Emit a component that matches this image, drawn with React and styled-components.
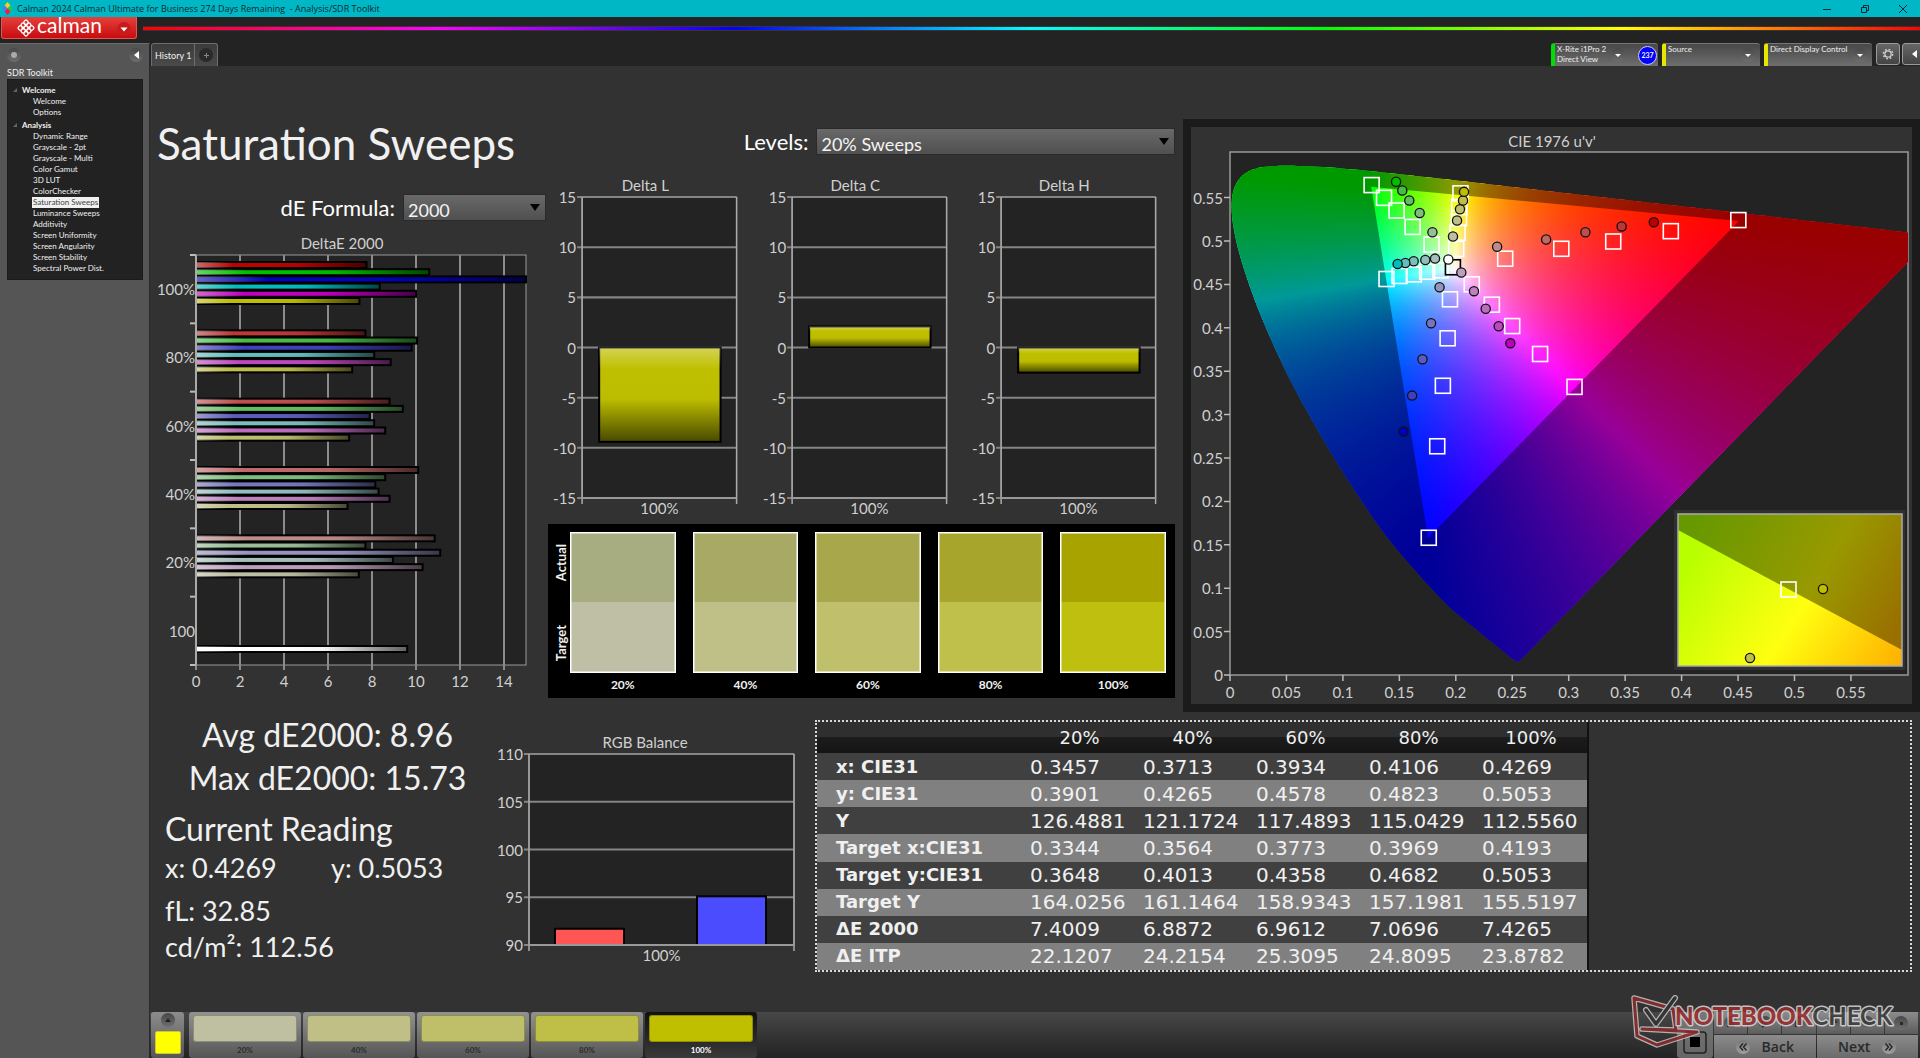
import React from 'react';
import styled, { createGlobalStyle, css } from 'styled-components';

const GlobalStyle = createGlobalStyle`
  * {
    box-sizing: border-box;
  }

  body {
    margin: 0;
    background: #323232;
    color: #f0f0f0;
    font-family: Lato, 'Open Sans', sans-serif;
  }

  button, select {
    font-family: inherit;
    color: inherit;
    border: 0;
    padding: 0;
  }

  svg {
    display: block;
  }
`;

/* ---------- data ---------- */

const LEVELS = ['20%', '40%', '60%', '80%', '100%'];

const TREE = [
  { title: 'Welcome', items: ['Welcome', 'Options'] },
  {
    title: 'Analysis',
    items: [
      'Dynamic Range', 'Grayscale - 2pt', 'Grayscale - Multi', 'Color Gamut', '3D LUT',
      'ColorChecker', 'Saturation Sweeps', 'Luminance Sweeps', 'Additivity',
      'Screen Uniformity', 'Screen Angularity', 'Screen Stability', 'Spectral Power Dist.',
    ],
  },
];

const SWATCHES = [
  { level: '20%', actual: '#a7ad80', target: '#bfbfa5', tile: '#bfbfa2' },
  { level: '40%', actual: '#a9a966', target: '#bfbf88', tile: '#bfbf86' },
  { level: '60%', actual: '#a9a74b', target: '#bfbf6c', tile: '#bfbf69' },
  { level: '80%', actual: '#a8a52d', target: '#bfbf4b', tile: '#bfbf48' },
  { level: '100%', actual: '#a9a300', target: '#bfbf10', tile: '#bfbf00' },
];

const READINGS = [
  ['x: CIE31', '0.3457', '0.3713', '0.3934', '0.4106', '0.4269'],
  ['y: CIE31', '0.3901', '0.4265', '0.4578', '0.4823', '0.5053'],
  ['Y', '126.4881', '121.1724', '117.4893', '115.0429', '112.5560'],
  ['Target x:CIE31', '0.3344', '0.3564', '0.3773', '0.3969', '0.4193'],
  ['Target y:CIE31', '0.3648', '0.4013', '0.4358', '0.4682', '0.5053'],
  ['Target Y', '164.0256', '161.1464', '158.9343', '157.1981', '155.5197'],
  ['ΔE 2000', '7.4009', '6.8872', '6.9612', '7.0696', '7.4265'],
  ['ΔE ITP', '22.1207', '24.2154', '25.3095', '24.8095', '23.8782'],
];

// red, green, blue, cyan, magenta, yellow per level
const DELTA_E = [
  { label: '100%', sat: 4, values: [7.75, 10.6, 15.73, 8.35, 10, 7.43] },
  { label: '80%', sat: 3, values: [7.7, 10.05, 9.8, 8.1, 8.85, 7.1] },
  { label: '60%', sat: 2, values: [8.8, 9.4, 7.9, 8.1, 8.6, 6.96] },
  { label: '40%', sat: 1, values: [10.1, 8.6, 8.15, 8.3, 8.8, 6.89] },
  { label: '20%', sat: 0, values: [10.85, 7.7, 11.1, 8.95, 10.3, 7.4] },
];

const HUES = ['r', 'g', 'b', 'c', 'm', 'y'];
const MASKS = { r: [1, 0, 0], g: [0, 1, 0], b: [0, 0, 1], c: [0, 1, 1], m: [1, 0, 1], y: [1, 1, 0] };
const OFF = {
  r: [138, 104, 78, 55, 0],
  g: [152, 124, 98, 70, 0],
  b: [148, 118, 92, 64, 0],
  c: [166, 146, 122, 96, 0],
  m: [158, 128, 108, 72, 0],
  y: [165, 136, 108, 75, 0],
};

const hueColor = (hue, sat) => {
  const off = OFF[hue][sat];
  return `rgb(${MASKS[hue].map((on) => (on ? 190 : off)).join(',')})`;
};

const TARGETS = [
  [0.125, 0.565], [0.136, 0.5503], [0.1471, 0.5357], [0.1613, 0.5168], [0.1781, 0.4965],
  [0.2037, 0.5555], [0.2026, 0.5397], [0.2024, 0.527], [0.2011, 0.5101], [0.1999, 0.4914],
  [0.2433, 0.4802], [0.293, 0.4916], [0.339, 0.5], [0.39, 0.5119], [0.4498, 0.5247],
  [0.1382, 0.4568], [0.1497, 0.4603], [0.1624, 0.4622], [0.1742, 0.4652], [0.186, 0.4668],
  [0.1944, 0.4334], [0.1923, 0.3885], [0.1881, 0.3338], [0.1831, 0.2641], [0.1756, 0.1587],
  [0.2137, 0.4507], [0.2315, 0.4272], [0.2495, 0.4026], [0.2742, 0.3704], [0.3047, 0.3325],
];

// measured points, 20% first
const MEASURED = {
  r: [[0.2366, 0.4934], [0.28, 0.5018], [0.3148, 0.5101], [0.3469, 0.5168], [0.3754, 0.5216]],
  g: [[0.1793, 0.5101], [0.168, 0.5322], [0.1588, 0.5467], [0.1526, 0.5582], [0.1471, 0.5683]],
  b: [[0.1856, 0.4467], [0.1781, 0.4052], [0.1705, 0.3638], [0.1613, 0.3219], [0.1538, 0.2804]],
  c: [[0.1816, 0.4797], [0.173, 0.4781], [0.1627, 0.4766], [0.1553, 0.4747], [0.1485, 0.4735]],
  m: [[0.2049, 0.4637], [0.2161, 0.4422], [0.2265, 0.4219], [0.238, 0.4018], [0.2483, 0.3823]],
  y: [[0.1975, 0.5052], [0.2011, 0.5236], [0.2037, 0.5366], [0.2064, 0.5467], [0.2073, 0.5566]],
};

// spectral locus, CIE 1931 xy
const LOCUS = [
  [0.1741, 0.005], [0.1714, 0.0051], [0.1644, 0.0109], [0.1566, 0.0177], [0.144, 0.0297],
  [0.1241, 0.0578], [0.1096, 0.0868], [0.0913, 0.1327], [0.0687, 0.2007], [0.0454, 0.295],
  [0.0235, 0.4127], [0.0082, 0.5384], [0.0039, 0.6548], [0.0139, 0.7502], [0.0389, 0.812],
  [0.0743, 0.8338], [0.1142, 0.8262], [0.1547, 0.8059], [0.2296, 0.7543], [0.3016, 0.6923],
  [0.3731, 0.6245], [0.4441, 0.5547], [0.5125, 0.4866], [0.5752, 0.4242], [0.627, 0.3725],
  [0.6658, 0.334], [0.6915, 0.3083], [0.719, 0.2809], [0.7347, 0.2653],
];

/* ---------- colour math ---------- */

// linear RGB, scaled so that the strongest channel is full
const uvColor = (u, v) => {
  const X = (9 * u) / (4 * v);
  const Z = (12 - 3 * u - 20 * v) / (4 * v);
  const rgb = [
    3.2406 * X - 1.5372 - 0.4986 * Z,
    -0.9689 * X + 1.8758 + 0.0415 * Z,
    0.0557 * X - 0.204 + 1.057 * Z,
  ].map((c) => Math.max(0, c));
  const peak = Math.max(...rgb) || 1;
  return `rgb(${rgb.map((c) => Math.round((c / peak) * 255)).join(',')})`;
};

/* ---------- window chrome ---------- */

const Window = styled.div`
  min-height: 100vh;
  display: flex;
  flex-direction: column;
  overflow: hidden;
`;

const TitleBar = styled.header`
  height: 17px;
  display: flex;
  align-items: center;
  gap: 4px;
  padding: 0 0 0 2px;
  background: #00b7c6;
  color: #0b2a30;
  font-size: 9px;
  font-family: 'Open Sans', sans-serif;

  h1 {
    flex: 1;
    margin: 0;
    font-size: inherit;
    font-weight: 400;
    white-space: pre;
  }
`;

const WindowButton = styled.button`
  width: 34px;
  height: 17px;
  background: none;
  display: grid;
  place-items: center;
`;

const Banner = styled.div`
  height: 26px;
  background: #232323;
  display: flex;
  align-items: flex-start;
  gap: 6px;
  padding-left: 1px;
`;

const Brand = styled.button`
  width: 136px;
  height: 22px;
  display: flex;
  align-items: center;
  justify-content: center;
  border-radius: 0 0 3px 3px;
  border: 1px solid #e9544f;
  border-top: 0;
  background: linear-gradient(#e5403c, #c80c10);
  color: #fff;

  svg {
    overflow: visible;
  }
`;

const Rainbow = styled.div`
  flex: 1;
  height: 5px;
  margin-top: 9px;
  border: solid #3a3036;
  border-width: 1px 0;
  background: linear-gradient(to right, #f00, #f0f, #00f, #0ff, #0f0, #ff0, #f00);
`;

const Body = styled.div`
  flex: 1;
  display: flex;
`;

const Round = styled.span`
  width: 14px;
  height: 14px;
  border-radius: 50%;
  display: grid;
  place-items: center;
  background: ${(p) => (p.$dark ? '#2a2a2a' : 'linear-gradient(#484848, #6e6e6e)')};
`;

/* ---------- sidebar ---------- */

const Sidebar = styled.aside`
  width: 150px;
  flex: none;
  background: #555;
  border-top: 1px solid #6c6c6c;
  border-right: 1px solid #2a2a2a;
  padding: 0 6px 0 7px;
`;

const SidebarTop = styled.div`
  height: 22px;
  display: flex;
  justify-content: space-between;
  align-items: center;

  button {
    background: none;
  }
`;

const SidebarTitle = styled.h2`
  margin: 0;
  font-size: 9px;
  line-height: 13px;
  font-weight: 400;
`;

const Tree = styled.nav`
  background: #222;
  border: 1px solid #1b1b1b;
  padding: 4px 5px 4px;
  font-size: 8px;
  line-height: 11px;

  ul {
    list-style: none;
    margin: 0;
    padding: 0 0 1px 19px;
  }
`;

const TreeHead = styled.div`
  display: flex;
  align-items: center;
  gap: 5px;
  line-height: 12px;
  font-weight: 700;
`;

const TreeLink = styled.a`
  display: inline-block;
  padding: 0 1px;
  line-height: 11px;
  vertical-align: top;
  text-decoration: none;
  color: ${(p) => (p.$active ? '#444' : '#f0f0f0')};
  background: ${(p) => (p.$active ? '#f0f0f0' : 'none')};
`;

/* ---------- tab strip ---------- */

const Main = styled.main`
  flex: 1;
  min-width: 0;
  display: flex;
  flex-direction: column;
`;

const Strip = styled.div`
  height: 23px;
  margin-right: -4px;
  background: #232323;
  display: flex;
  align-items: stretch;
  gap: 4px;
`;

const HistoryTabs = styled.div`
  display: flex;
  border: 1px solid #6e6e6e;
  border-bottom: 0;
  border-radius: 3px 3px 0 0;
  background: linear-gradient(#3c3c3c, #4a4a4a);
  margin-right: auto;
  margin-left: 1px;

  button {
    padding: 0 3px;
    font-size: 9px;
    background: none;
    border-right: 1px solid #6e6e6e;
  }

  button:last-child {
    padding: 0 4px;
    border: 0;
  }
`;

const Device = styled.button`
  width: ${(p) => p.$width}px;
  display: flex;
  align-items: center;
  justify-content: space-between;
  padding: 0 5px 0 2px;
  border-top: 1px solid #777;
  border-left: 4px solid ${(p) => p.$color};
  border-radius: 3px 3px 0 0;
  background: linear-gradient(#484848, #6e6e6e);
  text-align: left;
  font-size: 8px;
  line-height: 10px;
`;

const DeviceName = styled.span`
  align-self: flex-start;
  flex: 1;
  white-space: pre-line;
`;

const Count = styled.span`
  width: 19px;
  height: 19px;
  margin-left: 13px;
  margin-right: -4px;
  border-radius: 50%;
  border: 1px solid #c8c8ff;
  background: #00f;
  font-size: 7px;
  font-weight: 700;
  line-height: 17px;
  text-align: center;
`;

const IconButton = styled.button`
  width: 24px;
  height: 22px;
  margin-right: -2px;
  border: 1px solid #9a9a9a;
  border-radius: 3px;
  display: grid;
  place-items: center;
  background: linear-gradient(#666, #444);
`;

/* ---------- workspace ---------- */

const Upper = styled.section`
  display: grid;
  grid-template-columns: 396fr 637fr 737fr;
`;

const Overview = styled.div`
  padding-top: 51px;
`;

const PageTitle = styled.h2`
  margin: 0 0 25px;
  padding-left: 7px;
  font-size: 44px;
  line-height: 52px;
  font-weight: 400;
`;

const Field = styled.label`
  display: flex;
  align-items: center;
  justify-content: flex-end;
  gap: 8px;
  font-size: 22px;
  line-height: 26px;
  color: #fff;
`;

const SelectBox = styled.span`
  position: relative;
  width: ${(p) => p.$width};

  select {
    appearance: none;
    display: block;
    width: 100%;
    height: 27px;
    padding: 4px 4px 0;
    border: 1px solid #2a2a2a;
    background: linear-gradient(#696969, #505050);
    color: #f4f4f4;
    font-size: 18px;
  }

  svg {
    position: absolute;
    right: 6px;
    top: 10px;
    pointer-events: none;
  }
`;

const DeltaEArea = styled.div`
  margin-top: 9px;
`;

const Middle = styled.div`
  padding: 62px 8px 0 0;
`;

const DeltaRow = styled.div`
  display: grid;
  grid-template-columns: repeat(3, 1fr);
  margin: 21px 0 2px;
`;

const ChartSvg = styled.svg`
  width: 100%;
  height: auto;

  text {
    fill: #d0d0d0;
    font-size: 15px;
  }
`;

const SwatchPanel = styled.div`
  margin-left: 2px;
  background: #000;
  padding: 8px 9px 0 4px;
  height: 174px;
  display: flex;
  font-weight: 700;
`;

const SwatchSides = styled.div`
  width: 18px;
  height: 141px;
  padding: 12px 0;
  display: flex;
  flex-direction: column-reverse;
  justify-content: space-between;
  align-items: center;
  font-size: 13px;

  span {
    writing-mode: vertical-rl;
    rotate: 180deg;
    line-height: 14px;
  }
`;

const SwatchGrid = styled.div`
  flex: 1;
  display: grid;
  grid-template-columns: repeat(5, 1fr);
  gap: 17px;
`;

const SwatchItem = styled.figure`
  margin: 0;
  text-align: center;

  figcaption {
    font-size: 12px;
    line-height: 23px;
  }
`;

const SwatchColor = styled.div`
  height: 141px;
  border: 1px solid #fff;
  box-shadow: inset 0 0 0 1px rgba(255, 255, 255, 0.5);
  background: ${(p) => `linear-gradient(${p.$actual} 50%, ${p.$target} 50%)`};
`;

const CiePanel = styled.div`
  margin: 53px 0 0;
  border: 8px solid #1b1b1b;
  background: #323232;
`;

const Lower = styled.section`
  display: grid;
  grid-template-columns: 340fr 325fr 1105fr;
`;

const Stats = styled.div`
  padding: 1px 0 0 15px;
  font-size: 27px;
  line-height: 36px;

  p {
    margin: 0;
  }
`;

const Headline = styled.p`
  font-size: 32px;
  line-height: 43px;
  ${(p) => p.$center && css`
    text-align: center;
  `}
`;

const Current = styled.div`
  margin-top: 8px;
`;

const Pair = styled.div`
  display: grid;
  grid-template-columns: 166px 1fr;
  padding-bottom: 7px;
`;

const RgbArea = styled.div`
  padding-top: 18px;
`;

const TableFrame = styled.div`
  margin: 8px 8px 0 0;
  border: 2px dotted #d8d8d8;
  align-self: start;
`;

const Table = styled.table`
  width: 772px;
  height: 248px;
  border-collapse: collapse;
  table-layout: fixed;
  border-right: 2px solid #111;
  font-family: 'DejaVu Sans', sans-serif;
  font-size: 20px;
  line-height: 20px;

  th, td {
    padding: 0 0 0 7px;
    text-align: left;
    font-weight: 400;
    white-space: nowrap;
  }

  thead tr {
    height: 31px;
    background: linear-gradient(#2f2f2f 50%, #1c1c1c 50%, #141414);
  }

  thead th {
    padding: 0;
    text-align: center;
    font-size: 18px;
  }

  thead th:first-child {
    width: 206px;
  }

  tbody tr {
    background: #404040;
  }

  tbody tr:nth-child(even) {
    background: #808080;
  }

  tbody th {
    padding-left: 19px;
    font-weight: 700;
    font-size: 18px;
  }
`;

/* ---------- footer ---------- */

const Footer = styled.footer`
  position: relative;
  height: 46px;
  margin-top: auto;
  display: flex;
  gap: 2px;
  padding: 0 2px 0 1px;
  background: linear-gradient(#474747, #232323);
`;

const Picker = styled.button`
  width: 33px;
  margin-right: 3px;
  padding: 1px 4px 4px;
  border-radius: 3px;
  display: flex;
  flex-direction: column;
  justify-content: space-between;
  align-items: center;
  background: linear-gradient(#8c8c8c, #555);

  i {
    width: 26px;
    height: 23px;
    border-radius: 2px;
    border: 1px solid #c8c830;
    background: #ff0;
  }
`;

const Tile = styled.button`
  width: 112px;
  padding: 3px 4px 0;
  border-radius: 3px;
  font-size: 8px;
  line-height: 16px;
  color: ${(p) => (p.$active ? '#fff' : '#2c2c2c')};
  font-weight: 700;
  background: ${(p) => (p.$active ? 'linear-gradient(#111, #3a3a3a)' : 'linear-gradient(#929292, #555)')};

  i {
    display: block;
    height: 27px;
    border: 1px solid rgba(0, 0, 0, 0.25);
    border-radius: 3px;
    background: ${(p) => p.$color};
  }
`;

const Transport = styled.div`
  margin-left: auto;
  display: flex;
  gap: 1px;
  color: #222;
`;

const StopButton = styled.button`
  width: 36px;
  border-radius: 3px;
  display: grid;
  place-items: end center;
  padding-bottom: 4px;
  background: linear-gradient(#777, #666);
`;

const NavGrid = styled.div`
  width: 204px;
  display: grid;
  grid-template-columns: repeat(6, 1fr);
  grid-template-rows: 22px 23px;
  gap: 1px;
`;

const SmallButton = styled.button`
  display: grid;
  place-items: center;
  background: linear-gradient(#8c8c8c, #5c5c5c);
`;

const NavButton = styled.button`
  grid-column: span 3;
  display: flex;
  align-items: center;
  justify-content: center;
  gap: 12px;
  font-family: 'Open Sans', sans-serif;
  font-weight: 600;
  font-size: 14px;
  color: #2a2a2a;
  background: linear-gradient(#8c8c8c, #6a6a6a);

  ${Round} {
    background: linear-gradient(#777, #a0a0a0);
  }
`;

const Watermark = styled.svg`
  position: absolute;
  right: 4px;
  bottom: 8px;
  overflow: visible;
  pointer-events: none;

  text {
    font-size: 24px;
    font-weight: 900;
    paint-order: stroke;
    stroke: #d8d8d8;
    stroke-width: 3px;
    stroke-linejoin: round;
  }
`;

/* ---------- pieces ---------- */

const Caret = ({ color = '#fff', size = 8 }) => (
  <svg width={size} height={size / 2} viewBox="0 0 8 4">
    <path d="M0 0h8L4 4z" fill={color} />
  </svg>
);

const LeftCaret = () => (
  <svg width="5" height="8" viewBox="0 0 5 8">
    <path d="M5 0v8L0 4z" fill="#fff" />
  </svg>
);

const Dropdown = ({ width, options }) => (
  <SelectBox $width={width}>
    <select>
      {options.map((o) => <option key={o}>{o}</option>)}
    </select>
    <svg width="10" height="7" viewBox="0 0 10 7">
      <path d="M0 0h10L5 7z" fill="#000" />
    </svg>
  </SelectBox>
);

const BrandLogo = () => (
  <svg width="120" height="20" viewBox="0 0 120 20">
    <g transform="translate(17 10) rotate(45)" fill="none" stroke="#fff" strokeWidth="1.3">
      {[-4, 0, 4].map((x) => [-4, 0, 4].map((y) => (
        <rect key={`${x}${y}`} x={x - 2} y={y - 2} width="4" height="4" rx="1.4" />
      )))}
    </g>
    <text x="28" y="15" fill="#fff" fontSize="21" fontFamily="Lato, sans-serif">calman</text>
    <circle cx="115" cy="11" r="7" fill="#c81c1c" />
    <path d="M111.500 9.500h7l-3.500 4z" fill="#fff" />
  </svg>
);

const AppIcon = () => (
  <svg width="11" height="13" viewBox="0 0 11 13">
    <path d="M5.500 0L8.500 3.500 5.500 6.500 2.500 3.500z" fill="#f5d020" />
    <path d="M2.500 3.500L5.500 6.500 2.500 9.500 0 6.500z" fill="#4d7df0" />
    <path d="M8.500 3.500L11 6.500 8.500 9.500 5.500 6.500z" fill="#28c840" />
    <path d="M5.500 6.500L8.500 9.500 5.500 13 2.500 9.500z" fill="#e8204c" />
  </svg>
);

const GearIcon = () => (
  <svg width="12" height="12" viewBox="0 0 12 12" fill="none" stroke="#d0d0d0">
    <circle cx="6" cy="6" r="3.200" strokeWidth="1.300" />
    <circle cx="6" cy="6" r="4.700" strokeWidth="1.400" strokeDasharray="1.800 1.890" />
  </svg>
);

function DeltaEChart() {
  const x0 = 46;
  const top = 25;
  const bottom = 435;
  const unit = 22;
  const right = 376;
  const pitch = (bottom - top) / 6;
  return (
    <ChartSvg viewBox="0 0 396 470">
      <defs>
        <linearGradient id="shade">
          <stop offset="0" stopColor="#fff" stopOpacity="0.4" />
          <stop offset="0.220" stopColor="#fff" stopOpacity="0" />
          <stop offset="0.600" stopColor="#000" stopOpacity="0.040" />
          <stop offset="1" stopColor="#000" stopOpacity="0.620" />
        </linearGradient>
      </defs>
      <text x="192" y="19" textAnchor="middle">DeltaE 2000</text>
      <rect x={x0} y={top} width={right - x0} height={bottom - top} fill="#232323" stroke="#999" />
      {[0, 2, 4, 6, 8, 10, 12, 14].map((n) => (
        <g key={n}>
          <path d={`M${x0 + n * unit} ${top}V${bottom + 5}`} stroke="#8c8c8c" strokeWidth="2" />
          <text x={x0 + n * unit} y="457" textAnchor="middle">{n}</text>
        </g>
      ))}
      {[0, 1, 2, 3, 4, 5, 6].map((n) => (
        <path key={n} d={`M${x0 - 6} ${top + n * pitch}h6`} stroke="#bbb" strokeWidth="2" />
      ))}
      {DELTA_E.map((group, g) => (
        <g key={group.label}>
          <text x="45" y={65 + g * pitch} textAnchor="end">{group.label}</text>
          {group.values.map((v, i) => {
            const bar = {
              x: x0,
              y: 32 + g * pitch + i * 7.2,
              width: Math.min(v * unit, right - x0),
              height: 6,
            };
            return (
              <g key={HUES[i]}>
                <rect {...bar} fill={hueColor(HUES[i], group.sat)} stroke="#000" strokeWidth="2" />
                <rect {...bar} fill="url(#shade)" />
              </g>
            );
          })}
        </g>
      ))}
      <text x="45" y={65 + 5 * pitch} textAnchor="end">100</text>
      <rect x={x0} y="416" width={9.6 * unit} height="6" fill="#fff" stroke="#000" strokeWidth="2" />
      <rect x={x0} y="416" width={9.6 * unit} height="6" fill="url(#shade)" />
      <path d={`M${x0} ${top}V${bottom}`} stroke="#aaa" strokeWidth="2" />
    </ChartSvg>
  );
}

function ColumnChart({ title, box, plot, min, max, step, bars, titleX }) {
  const [x0, top, right, bottom] = plot;
  const y = (v) => bottom - ((v - min) / (max - min)) * (bottom - top);
  const ticks = [];
  for (let t = min; t <= max; t += step) ticks.push(t);
  return (
    <ChartSvg viewBox={`0 0 ${box[0]} ${box[1]}`}>
      <defs>
        <linearGradient id="gloss" x2="0" y2="1">
          <stop offset="0" stopColor="#fff" stopOpacity="0.330" />
          <stop offset="0.230" stopColor="#fff" stopOpacity="0" />
          <stop offset="0.550" stopColor="#000" stopOpacity="0.020" />
          <stop offset="1" stopColor="#000" stopOpacity="0.620" />
        </linearGradient>
      </defs>
      <text x={titleX} y={top - 6} textAnchor="middle">{title}</text>
      <rect x={x0} y={top} width={right - x0} height={bottom - top} fill="#232323" stroke="#999" />
      {ticks.map((t) => (
        <g key={t}>
          <path d={`M${x0 - 5} ${y(t)}H${right}`} stroke="#858585" strokeWidth="2" />
          <text x={x0 - 6} y={y(t) + 6} textAnchor="end">{t}</text>
        </g>
      ))}
      <path d={`M${x0} ${top}V${bottom + 6}M${right} ${top}V${bottom + 6}`} stroke="#aaa" strokeWidth="1.500" />
      {bars.map((b) => {
        const base = Math.max(0, min);
        const rect = {
          x: b.x,
          y: Math.min(y(b.value), y(base)),
          width: b.width,
          height: Math.abs(y(b.value) - y(base)),
        };
        return (
          <g key={b.x}>
            <rect {...rect} fill={b.color} stroke="#000" strokeWidth="2" />
            {b.gloss && <rect {...rect} fill="url(#gloss)" />}
          </g>
        );
      })}
      <path d={`M${x0} ${bottom}H${right}`} stroke="#999" strokeWidth="2" />
      <text x={(x0 + right) / 2} y={bottom + 16} textAnchor="middle">100%</text>
    </ChartSvg>
  );
}

const CIE_X = 39;
const CIE_Y = 548;
const cx = (u) => CIE_X + u * 1129;
const cy = (v) => CIE_Y - v * 868;

const locusPath = (() => {
  const pts = LOCUS.map(([x, y]) => {
    const d = -2 * x + 12 * y + 3;
    return [cx((4 * x) / d), cy((9 * y) / d)];
  });
  let d = `M${pts[0]}`;
  for (let i = 0; i < pts.length - 1; i += 1) {
    const a = pts[Math.max(i - 1, 0)];
    const b = pts[i];
    const c = pts[i + 1];
    const e = pts[Math.min(i + 2, pts.length - 1)];
    d += `C${b[0] + (c[0] - a[0]) / 6} ${b[1] + (c[1] - a[1]) / 6} ${c[0] - (e[0] - b[0]) / 6} ${c[1] - (e[1] - b[1]) / 6} ${c[0]} ${c[1]}`;
  }
  return `${d}Z`;
})();

const gamutPath = `M${cx(0.4507)} ${cy(0.5229)}L${cx(0.125)} ${cy(0.5625)}L${cx(0.1754)} ${cy(0.1579)}Z`;

// the diagram is painted as thin rows, each one a horizontal gradient
const ROWS = Array.from({ length: 260 }, (_, i) => {
  const y = 30 + i * 2;
  const v = (CIE_Y - y - 1) / 868;
  const stops = Array.from({ length: 61 }, (__, k) => uvColor(k / 100, v));
  return { y, stops };
});

const Target = ({ x, y, color = '#fff' }) => (
  <rect x={x - 7} y={y - 7} width="15" height="15" fill="none" stroke={color} strokeWidth="1.600" />
);

const Dot = ({ x, y, color }) => (
  <circle cx={x} cy={y} r="4.600" fill={color} stroke="#111" strokeWidth="1.300" />
);

function CieChart() {
  const vs = [0, 0.05, 0.1, 0.15, 0.2, 0.25, 0.3, 0.35, 0.4, 0.45, 0.5, 0.55];
  return (
    <ChartSvg viewBox="0 0 721 577">
      <defs>
        <clipPath id="locus"><path d={locusPath} /></clipPath>
        <clipPath id="plot"><rect x="39" y="25" width="678" height="523" /></clipPath>
        {ROWS.map((row) => (
          <linearGradient key={row.y} id={`row${row.y}`} gradientUnits="userSpaceOnUse" x1={cx(0)} x2={cx(0.6)} y1="0" y2="0">
            {row.stops.map((c, k) => <stop key={k} offset={k / 60} stopColor={c} />)}
          </linearGradient>
        ))}
        <linearGradient id="insetDark" gradientUnits="userSpaceOnUse" x1="500" y1="400" x2="700" y2="510">
          <stop offset="0" stopColor="#669900" />
          <stop offset="0.600" stopColor="#999900" />
          <stop offset="1" stopColor="#997000" />
        </linearGradient>
        <linearGradient id="insetLight" gradientUnits="userSpaceOnUse" x1="487" y1="450" x2="680" y2="580">
          <stop offset="0" stopColor="#b8ff00" />
          <stop offset="0.520" stopColor="#ffff10" />
          <stop offset="1" stopColor="#ffb000" />
        </linearGradient>
      </defs>
      <text x="361" y="20" textAnchor="middle">CIE 1976 u'v'</text>
      <rect x="39" y="25" width="678" height="523" fill="#232323" stroke="#999" strokeWidth="1.500" />
      <g clipPath="url(#plot)">
        <g clipPath="url(#locus)">
          {ROWS.map((row) => (
            <rect key={row.y} x="39" y={row.y} width="678" height="3" fill={`url(#row${row.y})`} />
          ))}
          <path d={locusPath + gamutPath} fillRule="evenodd" fill="#000" fillOpacity="0.400" />
        </g>
      </g>
      {vs.map((t) => (
        <g key={t}>
          <path d={`M${CIE_X - 6} ${cy(t)}h6M${cx(t)} ${CIE_Y}v6`} stroke="#bbb" strokeWidth="1.500" />
          <text x={CIE_X - 7} y={cy(t) + 6} textAnchor="end">{t}</text>
          <text x={cx(t)} y="571" textAnchor="middle">{t}</text>
        </g>
      ))}
      {TARGETS.map(([u, v]) => <Target key={`${u}-${v}`} x={cx(u)} y={cy(v)} />)}
      <Target x={cx(0.197)} y={cy(0.4703)} color="#000" />
      {HUES.map((h) => MEASURED[h].map(([u, v], i) => (
        <Dot key={h + i} x={cx(u)} y={cy(v)} color={hueColor(h, i)} />
      )))}
      <Dot x={cx(0.1934)} y={cy(0.4787)} color="#fff" />

      <rect x="483" y="383" width="231" height="160" fill="#303030" />
      <rect x="487" y="387" width="224" height="152" fill="url(#insetDark)" />
      <path d="M487 403L711 523V539H487Z" fill="url(#insetLight)" />
      <rect x="487" y="387" width="224" height="152" fill="none" stroke="#aaa" strokeWidth="1.500" />
      <Target x={597} y={462} />
      <Dot x={632} y={462} color="#bfbf00" />
      <Dot x={559} y={531} color="#bfbf4b" />
    </ChartSvg>
  );
}

const WatermarkLogo = () => (
  <Watermark width="287" height="58" viewBox="0 0 287 58" opacity="0.850">
    <g fill="none" strokeLinejoin="round" strokeLinecap="round">
      <path d="M5 6L44 17L47 38L13 37M5 6L8 44L28 53L68 40L13 37" stroke="#c8c8c8" strokeWidth="5.500" />
      <path d="M5 6L44 17L47 38L13 37M5 6L8 44L28 53L68 40L13 37" stroke="#8e2a2c" strokeWidth="3" />
      <path d="M17 18L27 32L46 6" stroke="#c8c8c8" strokeWidth="6" />
      <path d="M17 18L27 32L46 6" stroke="#333" strokeWidth="3.500" />
    </g>
    <text x="46" y="33" fill="#9c2c2f">NOTEBOOK<tspan fill="#3c3c3c" fontWeight="700">CHECK</tspan></text>
  </Watermark>
);

const yellowBar = (value) => [{ x: 53, width: 121, value, color: '#bfbf00', gloss: true }];

const DELTAS = [
  { title: 'Delta L', value: -9.4 },
  { title: 'Delta C', value: 2.1 },
  { title: 'Delta H', value: -2.5 },
];

const App = () => {
  return (
    <>
      <GlobalStyle />
      <Window>
        <TitleBar>
          <AppIcon />
          <h1>{'Calman 2024 Calman Ultimate for Business 274 Days Remaining  - Analysis/SDR Toolkit'}</h1>
          <WindowButton aria-label="Minimize">
            <svg width="8" height="8"><path d="M0 4.500h8" stroke="#123" /></svg>
          </WindowButton>
          <WindowButton aria-label="Restore">
            <svg width="8" height="8" fill="none" stroke="#123"><path d="M.5 2.500h5v5h-5zM2.500 2V.5h5v5H6" /></svg>
          </WindowButton>
          <WindowButton aria-label="Close">
            <svg width="8" height="8"><path d="M0 0l8 8M8 0L0 8" stroke="#123" /></svg>
          </WindowButton>
        </TitleBar>
        <Banner>
          <Brand aria-label="Calman menu"><BrandLogo /></Brand>
          <Rainbow />
        </Banner>
        <Body>
          <Sidebar>
            <SidebarTop>
              <Round><svg width="6" height="6"><circle cx="3" cy="3" r="3" fill="#aaa" /></svg></Round>
              <button aria-label="Collapse"><Round><LeftCaret /></Round></button>
            </SidebarTop>
            <SidebarTitle>SDR Toolkit</SidebarTitle>
            <Tree>
              {TREE.map((group) => (
                <React.Fragment key={group.title}>
                  <TreeHead>
                    <svg width="4" height="4"><path d="M4 0v4H0z" fill="#666" /></svg>
                    {group.title}
                  </TreeHead>
                  <ul>
                    {group.items.map((item) => (
                      <li key={item}>
                        <TreeLink href="#" $active={item === 'Saturation Sweeps'}>{item}</TreeLink>
                      </li>
                    ))}
                  </ul>
                </React.Fragment>
              ))}
            </Tree>
          </Sidebar>

          <Main>
            <Strip>
              <HistoryTabs>
                <button>History 1</button>
                <button aria-label="Add history"><Round $dark>
                  <svg width="5" height="5"><path d="M0 2.500h5M2.500 0v5" stroke="#888" /></svg>
                </Round></button>
              </HistoryTabs>
              <Device $width={107} $color="#0d0">
                <DeviceName>{'X-Rite i1Pro 2\nDirect View'}</DeviceName>
                <Round><Caret size={6} /></Round>
                <Count>237</Count>
              </Device>
              <Device $width={98} $color="#e6e600">
                <DeviceName>Source</DeviceName>
                <Round><Caret size={6} /></Round>
              </Device>
              <Device $width={108} $color="#e6e600">
                <DeviceName>Direct Display Control</DeviceName>
                <Round><Caret size={6} /></Round>
              </Device>
              <IconButton aria-label="Settings"><GearIcon /></IconButton>
              <IconButton aria-label="Show panel"><LeftCaret /></IconButton>
            </Strip>

            <Upper>
              <Overview>
                <PageTitle>Saturation Sweeps</PageTitle>
                <Field>dE Formula: <Dropdown width="143px" options={['2000']} /></Field>
                <DeltaEArea><DeltaEChart /></DeltaEArea>
              </Overview>
              <Middle>
                <Field>Levels: <Dropdown width="57%" options={['20% Sweeps']} /></Field>
                <DeltaRow>
                  {DELTAS.map((d) => (
                    <ColumnChart
                      key={d.title}
                      title={d.title}
                      titleX={99}
                      box={[209, 345]}
                      plot={[36, 21, 190, 321]}
                      min={-15}
                      max={15}
                      step={5}
                      bars={yellowBar(d.value)}
                    />
                  ))}
                </DeltaRow>
                <SwatchPanel>
                  <SwatchSides>
                    <span>Target</span>
                    <span>Actual</span>
                  </SwatchSides>
                  <SwatchGrid>
                    {SWATCHES.map((s) => (
                      <SwatchItem key={s.level}>
                        <SwatchColor $actual={s.actual} $target={s.target} />
                        <figcaption>{s.level}</figcaption>
                      </SwatchItem>
                    ))}
                  </SwatchGrid>
                </SwatchPanel>
              </Middle>
              <CiePanel><CieChart /></CiePanel>
            </Upper>

            <Lower>
              <Stats>
                <Headline $center>Avg dE2000: 8.96</Headline>
                <Headline $center>Max dE2000: 15.73</Headline>
                <Current>
                  <Headline>Current Reading</Headline>
                  <Pair><p>x: 0.4269</p><p>y: 0.5053</p></Pair>
                  <p>fL: 32.85</p>
                  <p>cd/m²: 112.56</p>
                </Current>
              </Stats>
              <RgbArea>
                <ColumnChart
                  title="RGB Balance"
                  titleX={155}
                  box={[325, 240]}
                  plot={[39, 24, 304, 215]}
                  min={90}
                  max={110}
                  step={5}
                  bars={[
                    { x: 65, width: 69, value: 91.7, color: '#ff5555' },
                    { x: 207, width: 69, value: 95.1, color: '#4c4cff' },
                  ]}
                />
              </RgbArea>
              <TableFrame>
                <Table>
                  <thead>
                    <tr>
                      <th aria-label="Measure" />
                      {LEVELS.map((l) => <th key={l} scope="col">{l}</th>)}
                    </tr>
                  </thead>
                  <tbody>
                    {READINGS.map(([name, ...cells]) => (
                      <tr key={name}>
                        <th scope="row">{name}</th>
                        {cells.map((c, i) => <td key={i}>{c}</td>)}
                      </tr>
                    ))}
                  </tbody>
                </Table>
              </TableFrame>
            </Lower>

            <Footer>
              <Picker aria-label="Current colour">
                <Round>
                  <svg width="6" height="4"><path d="M0 4h6L3 0z" fill="#222" /></svg>
                </Round>
                <i />
              </Picker>
              {SWATCHES.map((s) => (
                <Tile key={s.level} $color={s.tile} $active={s.level === '100%'}>
                  <i />
                  {s.level}
                </Tile>
              ))}
              <Transport>
                <StopButton aria-label="Stop">
                  <svg width="24" height="23" viewBox="0 0 24 23">
                    <rect x="1" y="1" width="22" height="21" rx="3" fill="none" stroke="#222" strokeWidth="1.500" />
                    <rect x="7" y="6" width="10" height="10" fill="#000" />
                  </svg>
                </StopButton>
                <NavGrid>
                  {[
                    ['Stop reading', 'M3 3h7v7H3z'],
                    ['Play', 'M4 2l6 4.500L4 11z'],
                    ['Pause', 'M3 3h2v7H3zM8 3h2v7H8z'],
                    ['Repeat', 'M2 6a4 4 0 0 1 8 0H8a2 2 0 0 0-4 0z'],
                    ['Refresh', 'M3 5a4 4 0 0 1 7 0l-2 1a2 2 0 0 0-3 0z'],
                    ['More', 'M5 5h3v3H5z'],
                  ].map(([label, d]) => (
                    <SmallButton key={label} aria-label={label}>
                      <Round><svg width="13" height="13"><path d={d} fill="#2a2a2a" /></svg></Round>
                    </SmallButton>
                  ))}
                  <NavButton>
                    <Round><svg width="8" height="8" fill="none" stroke="#222" strokeWidth="1.300"><path d="M4 .5L1 4l3 3.500M7.500 .5L4.500 4l3 3.500" /></svg></Round>
                    Back
                  </NavButton>
                  <NavButton>
                    Next
                    <Round><svg width="8" height="8" fill="none" stroke="#222" strokeWidth="1.300"><path d="M.5 .5L3.500 4l-3 3.500M4 .5L7 4 4 7.500" /></svg></Round>
                  </NavButton>
                </NavGrid>
              </Transport>
              <WatermarkLogo />
            </Footer>
          </Main>
        </Body>
      </Window>
    </>
  );
};

export default App;
